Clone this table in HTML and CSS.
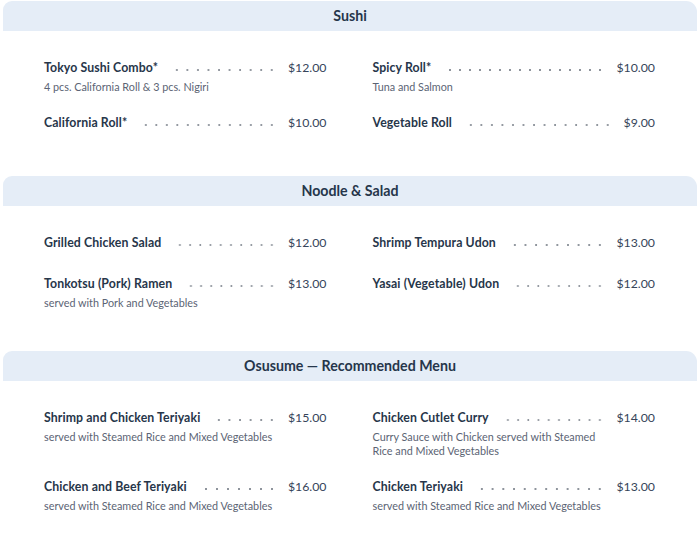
FILE: index.html
```html
<!DOCTYPE html>
<html lang="en">
<head>
<meta charset="utf-8">
<title>Menu</title>
<link rel="stylesheet" href="styles.css">
</head>
<body>
<main class="menu">
  <section class="section">
    <h2 class="section-title">Sushi</h2>
    <div class="items">
      <div class="item">
        <div class="item-line"><span class="item-name">Tokyo Sushi Combo*</span><span class="leader"></span><span class="item-price">$12.00</span></div>
        <p class="item-desc">4 pcs. California Roll &amp; 3 pcs. Nigiri</p>
      </div>
      <div class="item">
        <div class="item-line"><span class="item-name">Spicy Roll*</span><span class="leader"></span><span class="item-price">$10.00</span></div>
        <p class="item-desc">Tuna and Salmon</p>
      </div>
      <div class="item">
        <div class="item-line"><span class="item-name">California Roll*</span><span class="leader"></span><span class="item-price">$10.00</span></div>
      </div>
      <div class="item">
        <div class="item-line"><span class="item-name">Vegetable Roll</span><span class="leader"></span><span class="item-price">$9.00</span></div>
      </div>
    </div>
  </section>
  <section class="section">
    <h2 class="section-title">Noodle &amp; Salad</h2>
    <div class="items">
      <div class="item">
        <div class="item-line"><span class="item-name">Grilled Chicken Salad</span><span class="leader"></span><span class="item-price">$12.00</span></div>
      </div>
      <div class="item">
        <div class="item-line"><span class="item-name">Shrimp Tempura Udon</span><span class="leader"></span><span class="item-price">$13.00</span></div>
      </div>
      <div class="item">
        <div class="item-line"><span class="item-name">Tonkotsu (Pork) Ramen</span><span class="leader"></span><span class="item-price">$13.00</span></div>
        <p class="item-desc">served with Pork and Vegetables</p>
      </div>
      <div class="item">
        <div class="item-line"><span class="item-name">Yasai (Vegetable) Udon</span><span class="leader"></span><span class="item-price">$12.00</span></div>
      </div>
    </div>
  </section>
  <section class="section">
    <h2 class="section-title">Osusume — Recommended Menu</h2>
    <div class="items">
      <div class="item">
        <div class="item-line"><span class="item-name">Shrimp and Chicken Teriyaki</span><span class="leader"></span><span class="item-price">$15.00</span></div>
        <p class="item-desc">served with Steamed Rice and Mixed Vegetables</p>
      </div>
      <div class="item">
        <div class="item-line"><span class="item-name">Chicken Cutlet Curry</span><span class="leader"></span><span class="item-price">$14.00</span></div>
        <p class="item-desc">Curry Sauce with Chicken served with Steamed Rice and Mixed Vegetables</p>
      </div>
      <div class="item">
        <div class="item-line"><span class="item-name">Chicken and Beef Teriyaki</span><span class="leader"></span><span class="item-price">$16.00</span></div>
        <p class="item-desc">served with Steamed Rice and Mixed Vegetables</p>
      </div>
      <div class="item">
        <div class="item-line"><span class="item-name">Chicken Teriyaki</span><span class="leader"></span><span class="item-price">$13.00</span></div>
        <p class="item-desc">served with Steamed Rice and Mixed Vegetables</p>
      </div>
    </div>
  </section>
</main>
</body>
</html>
```

FILE: styles.css
```css
* { box-sizing: border-box; }

html, body {
  margin: 0;
  padding: 0;
  background: #ffffff;
}

body {
  font-family: Lato, "Open Sans", "Liberation Sans", sans-serif;
  color: #2c3a4d;
}

.menu {
  padding: 1px 3px 0 3px;
}

.section-title {
  margin: 0;
  height: 30px;
  line-height: 30px;
  text-align: center;
  font-size: 14.2px;
  font-weight: 700;
  color: #26364b;
  background: #e5edf7;
  border-radius: 9px 11px 0 0;
}

.items {
  display: grid;
  grid-template-columns: 1fr 1fr;
  column-gap: 46px;
  row-gap: 15px;
  padding: 23px 42px 41px 41px;
}

.item-line {
  display: flex;
  align-items: center;
  height: 26px;
}

.item-name {
  font-size: 12.3px;
  font-weight: 700;
  color: #27364a;
  white-space: nowrap;
  letter-spacing: 0.1px;
}

.leader {
  flex: 1;
  height: 4px;
  margin: 5px 11px 0 14px;
  background-image: radial-gradient(circle, #8e949c 0.8px, transparent 1.2px);
  background-size: 10px 4px;
  background-repeat: space no-repeat;
  background-position: right center;
}

.item-price {
  font-size: 12.3px;
  font-weight: 400;
  color: #36455a;
  white-space: nowrap;
}

.item-desc {
  margin: 0;
  font-size: 10.8px;
  line-height: 14px;
  color: #5b6474;
  max-width: 236px;
}
```
